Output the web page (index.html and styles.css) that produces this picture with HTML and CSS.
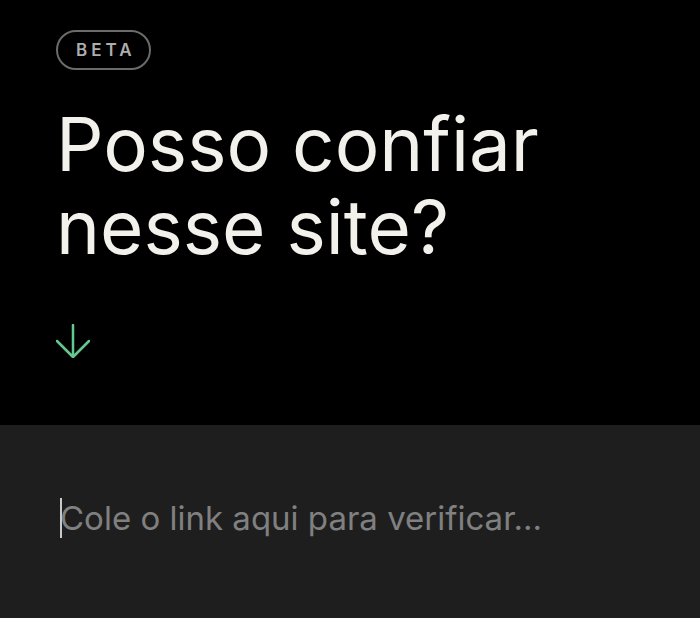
FILE: index.html
```html
<!DOCTYPE html>
<html lang="pt-BR">
  <head>
    <meta charset="UTF-8" />
    <meta name="viewport" content="width=device-width, initial-scale=1.0" />
    <title>Posso confiar nesse site?</title>
    <link rel="stylesheet" href="styles.css">
  </head>
  <body>
    <section class="hero">
      <span class="badge">BETA</span>
      <h1 class="title">Posso confiar<br />nesse site?</h1>
      <svg class="arrow" width="34" height="34" viewBox="0 0 34 34" fill="none">
        <path d="M17 1v32M1 17l16 16 16-16" stroke="currentColor" stroke-width="2.5" stroke-linecap="round" stroke-linejoin="round" />
      </svg>
    </section>
    <section class="check">
      <label class="field">
        <span class="caret"></span>
        <input type="text" class="url" placeholder="Cole o link aqui para verificar..." />
      </label>
    </section>
  </body>
</html>
```

FILE: styles.css
```css
* {
  margin: 0;
  padding: 0;
  box-sizing: border-box;
}
html,
body {
  height: 100%;
}
body {
  display: flex;
  flex-direction: column;
  background-color: #000;
  font-family: Inter, "Noto Sans", sans-serif;
}
.hero {
  display: flex;
  flex-direction: column;
  align-items: flex-start;
  height: 425px;
  padding: 30px 56px 0;
  background-color: #000;
}
.badge {
  display: inline-block;
  height: 40px;
  line-height: 36px;
  padding: 0 13px 0 18px;
  border: 2px solid #6b6b6b;
  border-radius: 20px;
  color: #adadad;
  font-size: 17px;
  font-weight: 600;
  letter-spacing: 4px;
}
.title {
  margin-top: 33px;
  color: #f3f1ec;
  font-size: 74.5px;
  font-weight: 400;
  line-height: 83px;
}
.arrow {
  display: block;
  margin-top: 55px;
  color: #63c98e;
}
.check {
  flex: 1;
  padding: 73px 56px 0 60px;
  background-color: #1e1e1e;
}
.field {
  position: relative;
  display: block;
}
.caret {
  position: absolute;
  left: 0;
  top: 0;
  width: 2px;
  height: 40px;
  background: #c9c9c9;
}
.url {
  display: block;
  width: 100%;
  height: 40px;
  border: none;
  outline: none;
  background: transparent;
  color: #e8e8e8;
  font-family: Inter, "Noto Sans", sans-serif;
  font-size: 33px;
  line-height: 40px;
}
.url::placeholder {
  color: #808080;
}
```
